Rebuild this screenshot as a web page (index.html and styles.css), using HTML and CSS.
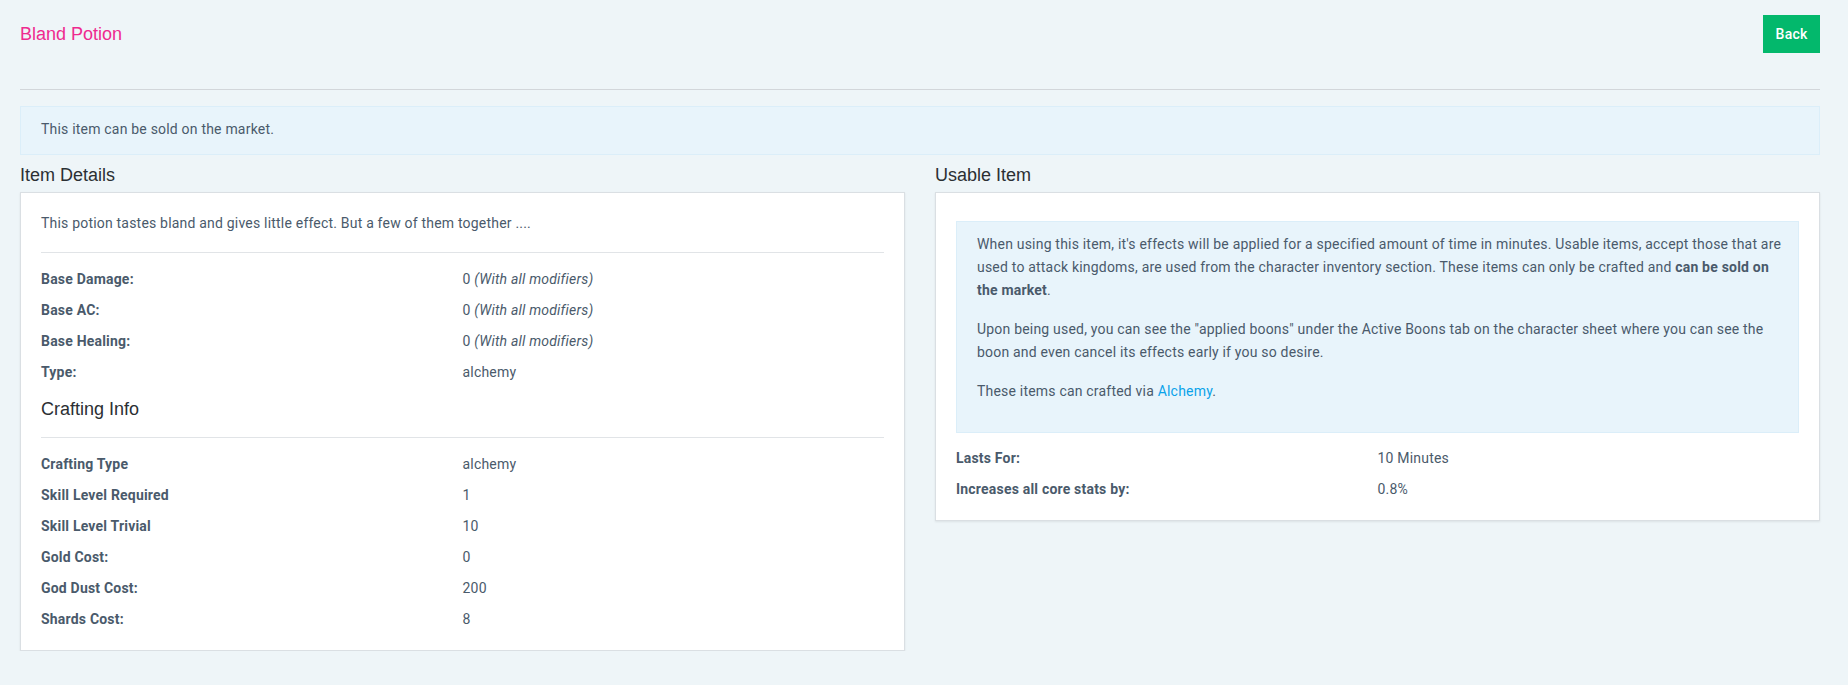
FILE: index.html
```html
<!DOCTYPE html>
<html>
<head>
<meta charset="utf-8">
<link rel="stylesheet" href="styles.css">
</head>
<body>
<div class="page">
  <div class="header">
    <h1 class="title">Bland Potion</h1>
    <button class="btn-back">Back</button>
  </div>
  <hr class="rule">
  <div class="notice">This item can be sold on the market.</div>
  <div class="columns">
    <section class="col">
      <h2 class="heading">Item Details</h2>
      <div class="card">
        <p class="desc">This potion tastes bland and gives little effect. But a few of them together ....</p>
        <hr class="divider">
        <dl class="grid">
          <dt>Base Damage:</dt><dd>0 <em>(With all modifiers)</em></dd>
          <dt>Base AC:</dt><dd>0 <em>(With all modifiers)</em></dd>
          <dt>Base Healing:</dt><dd>0 <em>(With all modifiers)</em></dd>
          <dt>Type:</dt><dd>alchemy</dd>
        </dl>
        <h3 class="subheading">Crafting Info</h3>
        <hr class="divider">
        <dl class="grid">
          <dt>Crafting Type</dt><dd>alchemy</dd>
          <dt>Skill Level Required</dt><dd>1</dd>
          <dt>Skill Level Trivial</dt><dd>10</dd>
          <dt>Gold Cost:</dt><dd>0</dd>
          <dt>God Dust Cost:</dt><dd>200</dd>
          <dt>Shards Cost:</dt><dd>8</dd>
        </dl>
      </div>
    </section>
    <section class="col">
      <h2 class="heading">Usable Item</h2>
      <div class="card">
        <div class="info">
          <p>When using this item, it's effects will be applied for a specified amount of time in minutes. Usable items, accept those that are used to attack kingdoms, are used from the character inventory section. These items can only be crafted and <strong>can be sold on the market</strong>.</p>
          <p>Upon being used, you can see the "applied boons" under the Active Boons tab on the character sheet where you can see the boon and even cancel its effects early if you so desire.</p>
          <p>These items can crafted via <a href="#" class="link">Alchemy</a>.</p>
        </div>
        <dl class="grid grid-usable">
          <dt>Lasts For:</dt><dd>10 Minutes</dd>
          <dt>Increases all core stats by:</dt><dd>0.8%</dd>
        </dl>
      </div>
    </section>
  </div>
</div>
</body>
</html>
```

FILE: styles.css
```css
* { box-sizing: border-box; }

html, body {
  margin: 0;
  padding: 0;
  background: #eef5f8;
}

body {
  font-family: Roboto, "Liberation Sans", sans-serif;
  font-size: 14px;
  line-height: 21px;
  letter-spacing: 0.2px;
  color: #4a5a6b;
}

.page {
  width: 1820px;
  padding: 15px 0 0 20px;
}

.header {
  display: flex;
  justify-content: space-between;
  align-items: center;
  height: 38px;
}

.title {
  margin: 0;
  font-family: "Liberation Sans", Arial, sans-serif;
  font-weight: normal;
  font-size: 18px;
  line-height: 22px;
  letter-spacing: 0;
  color: #ee2a8f;
}

.btn-back {
  width: 57px;
  height: 38px;
  border: none;
  border-radius: 0;
  background: #03b86c;
  color: #ffffff;
  font-family: Roboto, "Liberation Sans", sans-serif;
  font-size: 14px;
  font-weight: 500;
  letter-spacing: 0.2px;
  padding: 0;
  cursor: pointer;
}

.rule {
  margin: 36px 0 0 0;
  border: 0;
  border-top: 1px solid #d2d6da;
  height: 0;
}

.notice {
  margin-top: 16px;
  background: #e8f4fb;
  border: 1px solid #dbeef9;
  padding: 12px 20px 14px;
}

.columns {
  display: grid;
  grid-template-columns: 885px 885px;
  column-gap: 30px;
  align-items: start;
}

.heading {
  margin: 9px 0 6px;
  font-family: "Liberation Sans", Arial, sans-serif;
  font-weight: normal;
  font-size: 18px;
  line-height: 22px;
  letter-spacing: 0;
  color: #2b2f33;
}

.card {
  background: #ffffff;
  border: 1px solid #dadfe3;
  box-shadow: 0 1px 2px rgba(0, 0, 0, 0.08);
  padding: 20px;
}

.desc {
  margin: 0;
}

.divider {
  margin: 18px 0 16px;
  border: 0;
  border-top: 1px solid #e1e4e7;
  height: 0;
}

.grid {
  display: grid;
  grid-template-columns: 1fr 1fr;
  row-gap: 10px;
  margin: 0;
}

.grid dt {
  font-weight: bold;
}

.grid dd {
  margin: 0;
}

.subheading {
  margin: 15px 0 0;
  font-family: "Liberation Sans", Arial, sans-serif;
  font-weight: normal;
  font-size: 18px;
  line-height: 22px;
  letter-spacing: 0;
  color: #2b2f33;
}

.subheading + .divider {
  margin-top: 17px;
}

.info {
  margin-top: 8px;
  background: #e8f4fb;
  border: 1px solid #dbeef9;
  padding: 11px 16px 13px 20px;
  line-height: 23px;
}

.info p {
  margin: 0 0 16px;
}

.info strong {
  font-weight: bold;
}

.link {
  color: #0aa3ea;
  text-decoration: none;
}

.grid-usable {
  margin-top: 15px;
}
```
